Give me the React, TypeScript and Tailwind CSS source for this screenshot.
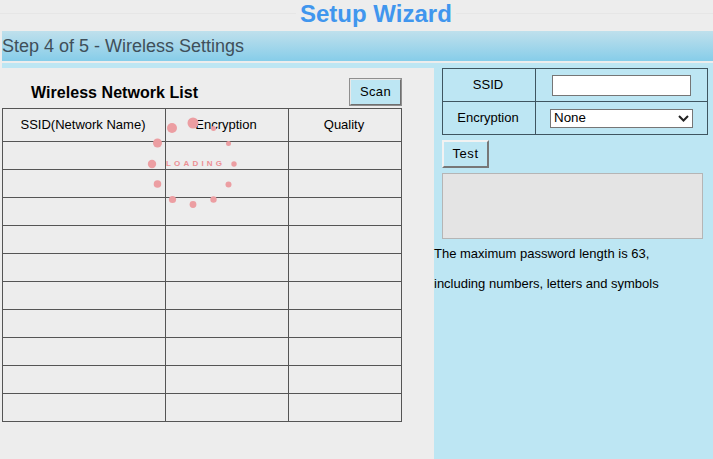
import React from 'react';

const rows = Array.from({ length: 10 });

const dots = [
  { x: 193, y: 123, r: 5.5 },
  { x: 172, y: 128, r: 5 },
  { x: 157.5, y: 143, r: 4.5 },
  { x: 152, y: 164, r: 4.2 },
  { x: 157.5, y: 184, r: 3.8 },
  { x: 172.5, y: 199.5, r: 3.6 },
  { x: 193, y: 204.5, r: 3.4 },
  { x: 213.5, y: 199.5, r: 3.2 },
  { x: 228.5, y: 184.5, r: 3 },
  { x: 234, y: 164, r: 2.7 },
  { x: 228.5, y: 143.5, r: 2.5 },
  { x: 213.5, y: 128.5, r: 2.5 },
];

function App() {
  return (
    <div className="relative h-[459px] w-[713px] overflow-hidden bg-[#ededed] font-['Liberation_Sans',Arial,sans-serif] text-black">
      <header className="relative h-[31px]">
        <div className="absolute left-0 right-0 top-[13px] h-px bg-[#e6e6e6]" />
        <h1 className="relative ml-[296px] w-fit bg-[#ededed] px-1 text-center text-[24px] font-bold leading-[27px] text-[#4096ee]">
          Setup Wizard
        </h1>
      </header>

      <div className="ml-[2px] flex h-[30px] items-center bg-gradient-to-b from-[#bfe0ec] to-[#86cde9] text-[18px] text-[#3f4f5a]">
        Step 4 of 5 - Wireless Settings
      </div>
      <div className="ml-[2px] h-[2px] bg-[#ededed]" />
      <div className="ml-[2px] h-[5px] bg-[#bde6f3]" />

      <div className="flex h-[391px]">
        <section className="ml-[2px] w-[432px]">
          <div className="flex h-[40px] w-[400px] items-start">
            <h2 className="ml-[29px] mt-[15px] text-[16px] font-bold leading-[20px] tracking-[0.05px]">Wireless Network List</h2>
            <button className="ml-auto mt-[10px] h-[28px] w-[53px] border-2 border-t-[#e8e8e8] border-l-[#e8e8e8] border-r-[#6f6f6f] border-b-[#6f6f6f] bg-[#bde6f3] text-[13px] tracking-[0.3px] outline outline-1 -outline-offset-1 outline-[#8f8f8f]">
              Scan
            </button>
          </div>
          <table className="w-[399px] table-fixed border-collapse text-[13px]">
            <colgroup>
              <col className="w-[163px]" />
              <col className="w-[123px]" />
              <col className="w-[113px]" />
            </colgroup>
            <thead>
              <tr className="h-[33px]">
                <th className="border border-[#555555] pr-[2px] font-normal">SSID(Network Name)</th>
                <th className="border border-[#555555] pr-[2px] font-normal">Encryption</th>
                <th className="border border-[#555555] pr-[2px] font-normal">Quality</th>
              </tr>
            </thead>
            <tbody>
              {rows.map((_, i) => (
                <tr key={i} className="h-[28px]">
                  <td className="border border-[#555555]" />
                  <td className="border border-[#555555]" />
                  <td className="border border-[#555555]" />
                </tr>
              ))}
            </tbody>
          </table>
        </section>

        <aside className="flex-1 bg-[#bde6f3]">
          <table className="ml-[8px] w-[266px] table-fixed border-collapse text-[13px]">
            <colgroup>
              <col className="w-[93px]" />
              <col />
            </colgroup>
            <tbody>
              <tr className="h-[33px]">
                <td className="border border-[#3f5560] pr-[2px] text-center">SSID</td>
                <td className="border border-[#3f5560]">
                  <input className="ml-[16px] block h-[21px] w-[139px] border border-[#767676] bg-white" />
                </td>
              </tr>
              <tr className="h-[33px]">
                <td className="border border-[#3f5560] pr-[2px] text-center">Encryption</td>
                <td className="border border-[#3f5560]">
                  <div className="relative ml-[14px] h-[19px] w-[143px]">
                    <select className="block h-[19px] w-[143px] appearance-none border border-[#767676] bg-white pb-[2px] pl-[3px] text-[13.33px] leading-[15px]">
                      <option>None</option>
                    </select>
                    <svg className="absolute right-[4px] top-[6px] h-[7px] w-[11px]" viewBox="0 0 11 7" fill="none" stroke="#222222" strokeWidth="2">
                      <path d="M1 1l4.5 4.5L10 1" />
                    </svg>
                  </div>
                </td>
              </tr>
            </tbody>
          </table>
          <button className="ml-[8px] mt-[5px] block h-[28px] w-[47px] border-2 border-t-[#f2f2f2] border-l-[#f2f2f2] border-r-[#777777] border-b-[#777777] bg-[#bde6f3] text-[13px] tracking-[0.6px]">
            Test
          </button>
          <div className="ml-[8px] mt-[5px] h-[66px] w-[261px] border border-[#b5b5b5] bg-[#e4e4e4]" />
          <p className="text-[13px] leading-[30px]">The maximum password length is 63,</p>
          <p className="text-[13px] leading-[30px]">including numbers, letters and symbols</p>
        </aside>
      </div>

      {/* loading spinner over the table */}
      <svg className="absolute left-0 top-0 h-[459px] w-[713px]" viewBox="0 0 713 459">
        {dots.map((d, i) => (
          <circle key={i} cx={d.x} cy={d.y} r={d.r} fill="#ec9ea2" />
        ))}
      </svg>
      <div className="absolute left-[166px] top-[160px] flex w-[56px] justify-between text-[8px] font-bold leading-[8px] text-[#ec8f94]">
        {'LOADING'.split('').map((c, i) => (
          <span key={i}>{c}</span>
        ))}
      </div>
    </div>
  );
}

export default App;
